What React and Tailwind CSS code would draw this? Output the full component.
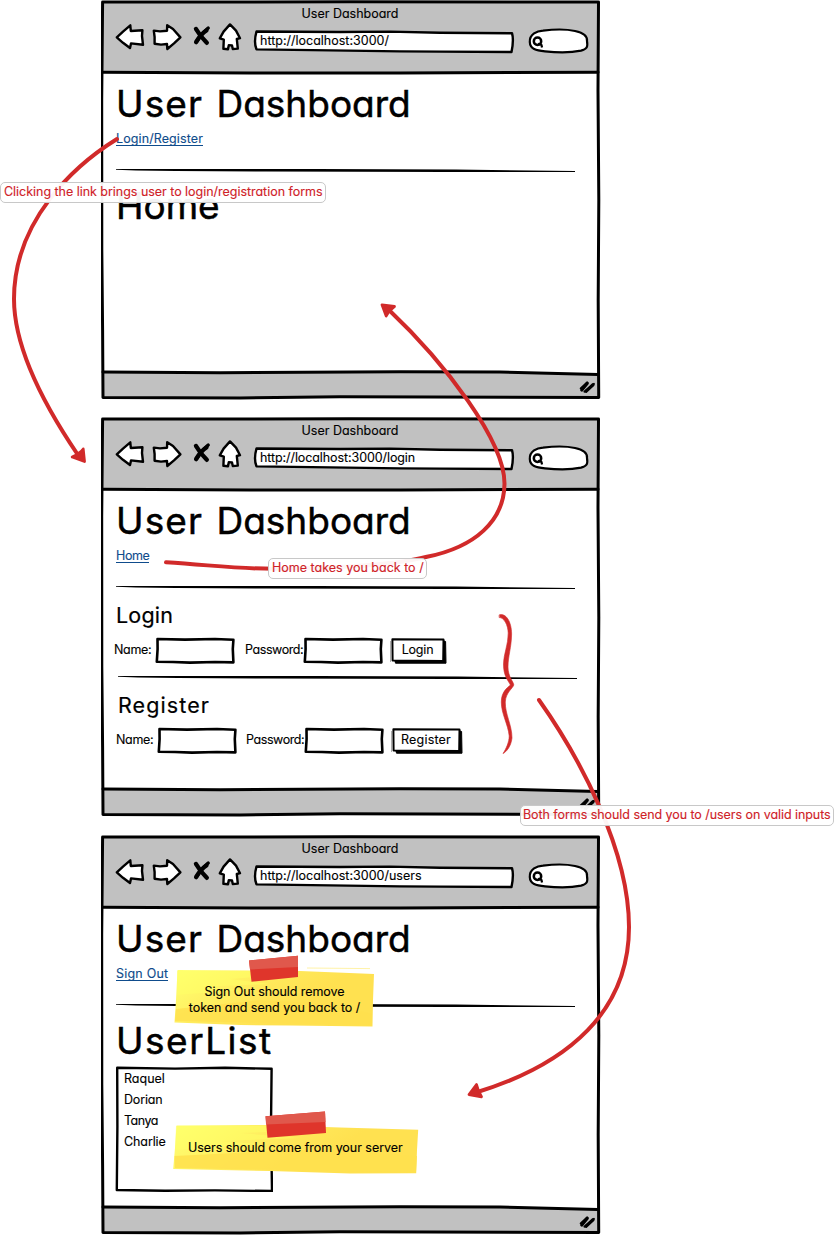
const TEXT = "block whitespace-nowrap text-[12.5px] leading-4 [-webkit-text-stroke:0.12px_currentColor]";

function T({ children, className = "" }) {
  return <span className={`${TEXT} ${className}`}>{children}</span>;
}

function Rule({ className = "" }) {
  return (
    <svg viewBox="0 0 460 6" className={`block h-[6px] w-[460px] ${className}`}>
      <path d="M0 2 L60 2 L200 2 L340 2.6 L459 4 L459 5 L330 4.9 L150 4.5 L60 4 L20 3.5 L0 2.8 Z" fill="#000" />
    </svg>
  );
}

function Frame() {
  return (
    <svg viewBox="101 0 500 400" className="pointer-events-none absolute top-0 left-0 h-[400px] w-[500px]" fill="none" stroke="#000" strokeWidth="3" strokeLinejoin="round" strokeLinecap="round">
      <path d="M102.6 2 L350 1.8 L598.5 2 L598 90 L598.8 200 L598.2 300 L598.7 397.5 L430 397 L340 396.8 L240 398 L103 397.6 L102.6 330 L101.8 250 L101.7 100 Z" />
      <path d="M102.5 72.3 L250 73 L400 73 L598 72.3" />
      <path d="M103 372 L220 372.8 L400 371.8 L500 372 L598 374.6" />
      <path d="M581.8 390 L587.3 383.2 M586 391.2 L593 384.8" strokeWidth="3.2" />
      <path d="M580.6 388.5 L587 382.4 M584.3 391.8 L594 383.8" strokeWidth="1.8" />
    </svg>
  );
}

function Toolbar({ url, urlClass }) {
  return (
    <div className="flex items-start pl-[14px]">
      <svg viewBox="115 23 30 28" className="h-7 w-[30px]" fill="#fff" stroke="#000" strokeWidth="2.4" strokeLinejoin="round">
        <path d="M116.8 37.3 L123 31.6 L130.3 25.3 L130.8 31 L142.4 30.3 L142 36 L143 44.8 L131 43.4 L130 48 L123 42.8 Z" />
      </svg>
      <svg viewBox="151 23 32 28" className="ml-[6px] h-7 w-8" fill="#fff" stroke="#000" strokeWidth="2.4" strokeLinejoin="round">
        <path d="M153.8 30.6 L160 31.4 L167 30.8 L167.2 25.2 L173 29 L180.4 37.4 L174 43.4 L167.3 49 L167 44 L161 44.6 L154.6 43.8 L154.6 37 Z" />
      </svg>
      <svg viewBox="192 23 20 28" className="ml-[9px] h-7 w-5" fill="none" stroke="#000" strokeLinecap="round">
        <path d="M196 29 Q200 36 206.8 42.8" strokeWidth="4.4" />
        <path d="M208.2 28 Q201 34 196 42.6" strokeWidth="3.4" />
        <path d="M206.4 30.5 Q201 34 196.2 41.8" strokeWidth="4.4" />
      </svg>
      <svg viewBox="218 22 24 29" className="ml-[6px] -mt-px h-[29px] w-6" fill="#fff" stroke="#000" strokeWidth="2.4" strokeLinejoin="round">
        <path d="M230 24.4 L236 30.6 L240 38.2 L236.8 39 L237.8 48.6 L232.8 49 L232 45.4 L228.8 45.2 L228 49.2 L223.4 48.8 L223.8 39.6 L219.8 38.4 L223.6 31.6 Z" />
      </svg>
      <div className="relative ml-[10px] mt-[5px] h-[26px] w-[264px]">
        <svg viewBox="252 28 264 26" className="absolute inset-0 h-[26px] w-[264px]" fill="#fff" stroke="#000" strokeWidth="2.4" strokeLinejoin="round">
          <path d="M256.5 31.5 L340 32 L390 31.6 L440 32.8 L512 33.2 Q514 40 511.5 52 L440 51.6 L400 51.4 L330 50.4 L256.5 49.4 Q253.5 42 256.5 31.5 Z" />
        </svg>
        <div className="relative pt-[5px] pl-[8px]"><T className={urlClass}>{url}</T></div>
      </div>
      <svg viewBox="527 27 64 28" className="ml-[11px] mt-1 h-7 w-16" fill="#fff" stroke="#000" strokeWidth="2.2" strokeLinejoin="round">
        <path d="M529.8 42 C529.5 34 537 31 543 30.6 C556 29 568 29.4 575 31 C584 33 587.5 37 587 41 C588 47 587 49 581 50.6 C570 53 556 52.6 545 51.3 C536 50.5 530 49 529.8 42 Z" />
        <circle cx="537.5" cy="41.2" r="3.7" strokeWidth="2.5" />
        <path d="M538 43.8 L541.5 45 L542 47.5" fill="none" strokeWidth="2.2" />
      </svg>
    </div>
  );
}

function BrowserWindow({ url, urlClass, className = "", children }) {
  return (
    <section className={`relative flex h-[400px] w-[500px] flex-col pt-[2px] ${className}`}>
      <header className="ml-[2px] h-[71px] w-[495px] shrink-0 bg-[#c1c1c1]">
        <div className="-ml-[2px] flex h-[21px] justify-center pt-[4px] pl-px"><T>User Dashboard</T></div>
        <div className="-ml-[2px] w-[500px]"><Toolbar url={url} urlClass={urlClass} /></div>
      </header>
      <div className="h-[300px] shrink-0 px-[15px] pt-2">
        <Heading>
          <span className="tracking-[1.1px]">User </span>
          <span className="ml-[2px]">Dashboard</span>
        </Heading>
        {children}
      </div>
      <footer className="ml-[2px] h-[24px] w-[495px] shrink-0 bg-[#c1c1c1]" />
      <Frame />
    </section>
  );
}

function Heading({ children, className = "" }) {
  return (
    <h1 className={`w-max text-[37px] leading-[45px] whitespace-nowrap [-webkit-text-stroke:0.5px_#000] ${className}`}>{children}</h1>
  );
}

function Link({ children, className = "" }) {
  return (
    <a className={`mt-1 block h-4 w-max border-b border-[#0f4c8c] text-[12.5px] leading-[17px] text-[#0f4c8c] [-webkit-text-stroke:0.12px_#0f4c8c] ${className}`}>{children}</a>
  );
}

function SketchInput({ className = "" }) {
  return (
    <span className={`relative block h-[27px] w-[80px] ${className}`}>
      <input className="absolute inset-[3px] w-[74px] bg-transparent outline-none" />
      <svg viewBox="0 0 80 27" className="pointer-events-none absolute inset-0 h-[27px] w-[80px]" fill="none" stroke="#000" strokeWidth="2.6" strokeLinejoin="round">
        <path d="M2.5 2 L30 2.6 L60 2 L78.4 2.8 L77.8 12 L78.4 25.4 L60 25 L35 25.6 L18 25 L1.8 24.8 L2.6 12 Z" />
      </svg>
    </span>
  );
}

function SketchButton({ wide, children, className = "" }) {
  const w = wide ? 72 : 57;
  return (
    <button className={`relative block h-[27px] ${wide ? "w-[72px]" : "w-[57px]"} ${className}`}>
      <svg viewBox={`0 0 ${w} 27`} className="absolute inset-0 h-[27px] w-full" strokeLinejoin="round">
        <path d="M0.5 4 V25" stroke="#999" strokeWidth="0.8" />
        <path d={`M5 24 L${w - 4} 24 L${w - 4} 3.5 L${w - 1.4} 4.5 L${w - 1} 26.2 L5.5 26.2 Z`} fill="#000" stroke="#000" />
        <path d={`M2.4 2.2 L${w - 3.5} 2.4 L${w - 3.8} 24 L2.6 23.6 Z`} fill="#fff" stroke="#000" strokeWidth="2" />
      </svg>
      <span className="relative flex justify-center pr-[2px] pb-px">{children}</span>
    </button>
  );
}

function LoginForm({ title, titleClass, rowClass, gap2, gap3, wide, btnClass }) {
  return (
    <>
      <h2 className={`mt-3 w-max text-[21.5px] leading-[26px] [-webkit-text-stroke:0.2px_#000] ${titleClass}`}>{title}</h2>
      <form className={`mt-[9px] flex items-center ${rowClass}`}>
        <div className="w-[41px] pb-[2px]"><T className="tracking-[-0.3px]">Name:</T></div>
        <SketchInput />
        <div className={`w-[58px] pb-[2px] ${gap2}`}><T className="tracking-[-0.42px]">Password:</T></div>
        <SketchInput />
        <SketchButton wide={wide} className={gap3}><T className={btnClass}>{title}</T></SketchButton>
      </form>
    </>
  );
}

function Callout({ className = "", textClass = "", children }) {
  return (
    <div className={`absolute flex h-[21px] items-center rounded-[5px] border border-[#c8c8c8] bg-white/95 pb-[2px] pl-[3px] text-[#cf2228] ${className}`}>
      <T className={textClass}>{children}</T>
    </div>
  );
}

function Arrows() {
  return (
    <svg viewBox="0 0 834 1235" className="pointer-events-none absolute inset-0 h-[1235px] w-[834px]" fill="none" stroke="#d12a2a" strokeWidth="4" strokeLinecap="round" strokeLinejoin="round">
      <path d="M117 139 C75 165 14 220 14 299 C14 345 42 402 78 455" />
      <path d="M84.5 461.5 L83.2 449 Q80 453 72.2 457 Z" fill="#d12a2a" strokeWidth="2.8" />
      <path d="M166 562.3 C220 566 245 569 275 568.8 S390 567 427 556.8 C475 547 504 521 504.5 484 C505 441 445 363 388 309" />
      <path d="M382 304.8 L394.5 306.5 Q389 310 386.2 316 Z" fill="#d12a2a" strokeWidth="2.8" />
      <path d="M539 700 C580 758 629 850 629 927 C629 1010 570 1064 476 1092.5" />
      <path d="M469 1094.5 L476.5 1084.5 Q478 1091 481.5 1096.8 Z" fill="#d12a2a" strokeWidth="2.8" />
      <path strokeWidth="0.6" fill="#d12a2a" d="M499.5 614.8 C506 612.5 511.6 622 511.6 634 C511.4 648 508 656 508 667 C508 677 513.8 682 513.8 685 C513 688 505.5 693 505.3 702 C505 714 512 725 512 738 C511 747 506 752 503 753.6 C506 749 509.2 742 509.2 736 C508 724 501.3 714 501.3 702 C501.3 692 507 688 510.4 685 C508 680 503.4 676 503.5 664 C503.6 654 508.2 645 508.2 633 C508 625 504 617.5 499.5 617.5 Z" />
    </svg>
  );
}

function StickyNoteOne() {
  return (
    <div className="absolute top-[954px] left-[172px] h-[75px] w-[205px]">
      <svg viewBox="172 954 205 75" className="absolute inset-0 h-[75px] w-[205px]">
        <defs>
          <linearGradient id="n1" x1="0" y1="0" x2="1" y2="0.45">
            <stop offset="0.05" stopColor="#ffff70" /><stop offset="0.5" stopColor="#ffe85a" /><stop offset="0.75" stopColor="#ffe150" />
          </linearGradient>
        </defs>
        <path d="M177.5 970 L250 970.5 L300 971 L374 974 L373 1000 L372.5 1026.5 L290 1025.5 L240 1025 L174.5 1022.5 L176 1000 Z" fill="url(#n1)" />
        <path d="M177 971 L250 971 L298 974 L230 979 L270 984 L200 987 L240 990 L177 995 Z" fill="#ffff66" opacity=".5" />
        <path d="M176 1009 L260 1000 L330 1004 L372 1014 L372 1025 L175 1021 Z" fill="#ffe04e" opacity=".8" />
        <path d="M307 968 L370 968.6" stroke="#ffef90" strokeWidth="0.8" />
        <path d="M249 960.5 L298 955.8 L298 977 L251.5 981.8 Z" fill="#df352b" />
        <path d="M249 960.5 L298 955.8 L298 967 L250 969.5 Z" fill="#e0584c" />
      </svg>
      <div className="relative flex flex-col items-center pt-[30px]">
        <T className="tracking-[-0.06px]">Sign Out should remove</T>
        <T className="tracking-[-0.03px]">token and send you back to /</T>
      </div>
    </div>
  );
}

function StickyNoteTwo() {
  return (
    <div className="absolute top-[1110px] left-[171px] h-[66px] w-[250px]">
      <svg viewBox="171 1110 250 66" className="absolute inset-0 h-[66px] w-[250px]">
        <defs>
          <linearGradient id="n2" x1="0" y1="0" x2="1" y2="0.3">
            <stop offset="0.05" stopColor="#ffff70" /><stop offset="0.5" stopColor="#ffe85a" /><stop offset="0.75" stopColor="#ffe150" />
          </linearGradient>
        </defs>
        <path d="M176.5 1125.5 L265 1125 L340 1127.5 L418.2 1129.8 L417 1150 L416.2 1173.2 L350 1173.5 L270 1171 L173.2 1169 L175 1148 Z" fill="url(#n2)" />
        <path d="M176 1126 L262 1126 L320 1130 L240 1133 L300 1138 L220 1141 L260 1144 L175 1150 Z" fill="#ffff66" opacity=".5" />
        <path d="M174.5 1156 L300 1150 L417 1156 L416 1172.5 L175 1168 Z" fill="#ffe04e" opacity=".85" />
        <path d="M265.5 1116.2 L325 1111.5 L326 1133 L267.5 1137.8 Z" fill="#df352b" />
        <path d="M265.5 1116.2 L325 1111.5 L325.5 1122 L266 1124.5 Z" fill="#e0584c" />
      </svg>
      <div className="relative pt-[30px] pl-[17px]"><T className="tracking-[-0.04px]">Users should come from your server</T></div>
    </div>
  );
}

const USERS = [
  { name: "Raquel", tracking: "" },
  { name: "Dorian", tracking: "tracking-[-0.15px]" },
  { name: "Tanya", tracking: "tracking-[-0.5px]" },
  { name: "Charlie", tracking: "tracking-[-0.1px]" },
];

export default function App() {
  return (
    <main className="relative h-[1235px] w-[834px] overflow-hidden bg-white font-['Inter',sans-serif] text-black [font-feature-settings:'cv11']">
      <div className="flex flex-col pl-[101px]">
        <BrowserWindow url="http://localhost:3000/" className="mb-[17px]">
          <Link className="tracking-[0.1px]">Login/Register</Link>
          <Rule className="mt-[21px]" />
          <Heading className="mt-[10px]">Home</Heading>
        </BrowserWindow>
        <BrowserWindow url="http://localhost:3000/login" urlClass="tracking-[-0.09px]" className="mb-[18px]">
          <Link className="tracking-[-0.4px]">Home</Link>
          <Rule className="mt-[21px]" />
          <LoginForm title="Login" titleClass="tracking-[0.2px]" rowClass="-ml-[2px]" gap2="ml-[10px]" gap3="ml-[7px]" btnClass="tracking-[-0.2px]" />
          <Rule className="mt-[10px] ml-[2px]" />
          <LoginForm title="Register" titleClass="ml-[2px] tracking-[1.1px]" gap2="ml-[9px]" gap3="ml-[7px]" wide btnClass="tracking-[0.2px]" />
        </BrowserWindow>
        <BrowserWindow url="http://localhost:3000/users">
          <Link className="tracking-[0.22px]">Sign Out</Link>
          <Rule className="mt-[21px]" />
          <Heading className="mt-[10px] tracking-[1.5px]">UserList</Heading>
          <div className="relative mt-[3px] -ml-px h-[126px] w-[158px]">
            <svg viewBox="0 0 158 126" className="absolute inset-0 h-[126px] w-[158px]" fill="none" stroke="#000" strokeWidth="2.4" strokeLinejoin="round">
              <path d="M2.2 1.8 L60 2.6 L110 1.8 L156.6 2.8 L156 60 L157 125 L100 124.4 L50 124.8 L1.8 124 L2.4 60 Z" />
            </svg>
            <ul className="relative pt-[2px] pl-[9px]">
              {USERS.map(({ name, tracking }) => (
                <li key={name} className="flex h-[21px] items-center"><T className={tracking}>{name}</T></li>
              ))}
            </ul>
          </div>
        </BrowserWindow>
      </div>
      <Arrows />
      <Callout className="top-[182px] left-0 w-[326px]" textClass="tracking-[-0.03px]">Clicking the link brings user to login/registration forms</Callout>
      <Callout className="top-[558px] left-[268px] w-[159px]">Home takes you back to /</Callout>
      <Callout className="top-[805px] left-[520px] w-[314px]" textClass="-ml-px tracking-[-0.06px]">Both forms should send you to /users on valid inputs</Callout>
      <StickyNoteOne />
      <StickyNoteTwo />
    </main>
  );
}
